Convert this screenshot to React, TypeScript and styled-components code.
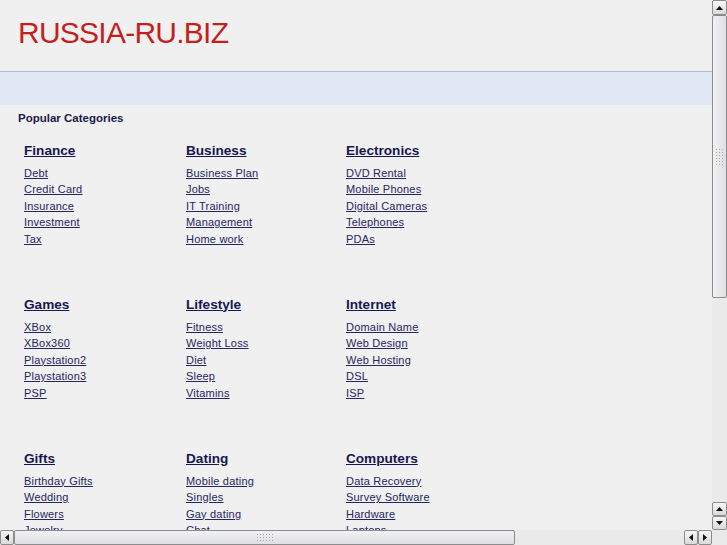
import React from "react";
import styled, { createGlobalStyle } from "styled-components";

const Global = createGlobalStyle`
  html, body { margin: 0; padding: 0; background: #f0f0f0; overflow: hidden; }
  * { box-sizing: border-box; }
`;

const Frame = styled.div`
  width: 727px;
  height: 545px;
  display: grid;
  grid-template-columns: 712px 15px;
  grid-template-rows: 530px 15px;
  overflow: hidden;
  background: #f0f0f0;
`;

const Content = styled.div`
  overflow: hidden;
  font-family: "Liberation Sans", Arial, sans-serif;
`;

const Header = styled.header`
  height: 72px;
  border-bottom: 1px solid #aebcd8;
  padding: 18px 0 0 18px;
`;

const Title = styled.h1`
  margin: 0;
  font-size: 30px;
  line-height: 1;
  font-weight: normal;
  letter-spacing: -0.75px;
  color: #c41f1f;
`;

const Band = styled.div`
  height: 33px;
  background: #e0e7f5;
`;

const SectionTitle = styled.h2`
  margin: 6px 0 0 18px;
  font-size: 11.5px;
  line-height: 14px;
  font-weight: bold;
  color: #1a1a4c;
`;

const Grid = styled.div`
  display: grid;
  grid-template-columns: 162px 160px 160px;
  padding: 16.5px 0 0 24px;
`;

const Block = styled.div`
  padding-bottom: 48.5px;
`;

const Heading = styled.a`
  display: block;
  margin: 0 0 6px;
  font-size: 13.6px;
  line-height: 17px;
  font-weight: bold;
  color: #161650;
  text-decoration: underline;
  width: max-content;
`;

const List = styled.ul`
  list-style: none;
  margin: 0;
  padding: 0;
`;

const Item = styled.li`
  font-size: 11px;
  line-height: 16.5px;
  letter-spacing: 0.2px;
`;

const Link = styled.a`
  color: #25255f;
  text-decoration: underline;
`;

const VBar = styled.div`
  display: flex;
  flex-direction: column;
  background-color: #f3f3f3;
  background-image: radial-gradient(#dedede 0.6px, transparent 0.8px);
  background-size: 2px 2px;
`;

const HBar = styled.div`
  display: flex;
  background-color: #f3f3f3;
  background-image: radial-gradient(#dedede 0.6px, transparent 0.8px);
  background-size: 2px 2px;
`;

const Corner = styled.div`
  background-color: #f3f3f3;
  background-image: radial-gradient(#dedede 0.6px, transparent 0.8px);
  background-size: 2px 2px;
`;

const ArrowButton = styled.div<{ $w: number; $h: number }>`
  width: ${(p) => p.$w}px;
  height: ${(p) => p.$h}px;
  flex: none;
  display: flex;
  align-items: center;
  justify-content: center;
  background: linear-gradient(#f6f6f6, #dadada);
  border: 1px solid #8c8c8c;
  border-radius: 2px;
`;

const Thumb = styled.div<{ $vertical?: boolean }>`
  flex: none;
  ${(p) => (p.$vertical ? "width: 15px; height: 283px;" : "height: 15px; width: 501px;")}
  display: flex;
  align-items: center;
  justify-content: center;
  background: ${(p) =>
    p.$vertical
      ? "linear-gradient(90deg, #f2f2f4, #dedfe3)"
      : "linear-gradient(#f2f2f4, #dedfe3)"};
  border: 1px solid #8c8c8c;
  border-radius: 2px;
`;

const Track = styled.div`
  flex: 1;
`;

const Grip = styled.div<{ $vertical?: boolean }>`
  ${(p) => (p.$vertical ? "width: 9px; height: 17px;" : "width: 17px; height: 9px;")}
  background-image: radial-gradient(#a8a8a8 0.6px, transparent 0.9px);
  background-size: 3px 3px;
`;

type Dir = "up" | "down" | "left" | "right";

const Arrow = ({ dir }: { dir: Dir }) => {
  const pts: Record<Dir, string> = {
    up: "0,4 3.5,0 7,4",
    down: "0,0 3.5,4 7,0",
    left: "4,0 0,3.5 4,7",
    right: "0,0 4,3.5 0,7",
  };
  const vert = dir === "up" || dir === "down";
  return (
    <svg width={vert ? 7 : 4} height={vert ? 4 : 7} viewBox={vert ? "0 0 7 4" : "0 0 4 7"}>
      <polygon points={pts[dir]} fill="#111" />
    </svg>
  );
};

const categories: { title: string; items: string[] }[] = [
  { title: "Finance", items: ["Debt", "Credit Card", "Insurance", "Investment", "Tax"] },
  { title: "Business", items: ["Business Plan", "Jobs", "IT Training", "Management", "Home work"] },
  { title: "Electronics", items: ["DVD Rental", "Mobile Phones", "Digital Cameras", "Telephones", "PDAs"] },
  { title: "Games", items: ["XBox", "XBox360", "Playstation2", "Playstation3", "PSP"] },
  { title: "Lifestyle", items: ["Fitness", "Weight Loss", "Diet", "Sleep", "Vitamins"] },
  { title: "Internet", items: ["Domain Name", "Web Design", "Web Hosting", "DSL", "ISP"] },
  { title: "Gifts", items: ["Birthday Gifts", "Wedding", "Flowers", "Jewelry", "Gift Baskets"] },
  { title: "Dating", items: ["Mobile dating", "Singles", "Gay dating", "Chat", "Personals"] },
  { title: "Computers", items: ["Data Recovery", "Survey Software", "Hardware", "Laptops", "Software"] },
];

export default function App() {
  return (
    <>
      <Global />
      <Frame>
        <Content>
          <Header>
            <Title>RUSSIA-RU.BIZ</Title>
          </Header>
          <Band />
          <SectionTitle>Popular Categories</SectionTitle>
          <Grid>
            {categories.map((c) => (
              <Block key={c.title}>
                <Heading href="#">{c.title}</Heading>
                <List>
                  {c.items.map((i) => (
                    <Item key={i}>
                      <Link href="#">{i}</Link>
                    </Item>
                  ))}
                </List>
              </Block>
            ))}
          </Grid>
        </Content>
        <VBar>
          <ArrowButton $w={15} $h={15}>
            <Arrow dir="up" />
          </ArrowButton>
          <Thumb $vertical>
            <Grip $vertical />
          </Thumb>
          <Track />
          <ArrowButton $w={15} $h={14}>
            <Arrow dir="up" />
          </ArrowButton>
          <ArrowButton $w={15} $h={14}>
            <Arrow dir="down" />
          </ArrowButton>
        </VBar>
        <HBar>
          <ArrowButton $w={14} $h={15}>
            <Arrow dir="left" />
          </ArrowButton>
          <Thumb>
            <Grip />
          </Thumb>
          <Track />
          <ArrowButton $w={14} $h={15}>
            <Arrow dir="left" />
          </ArrowButton>
          <ArrowButton $w={14} $h={15}>
            <Arrow dir="right" />
          </ArrowButton>
        </HBar>
        <Corner />
      </Frame>
    </>
  );
}
